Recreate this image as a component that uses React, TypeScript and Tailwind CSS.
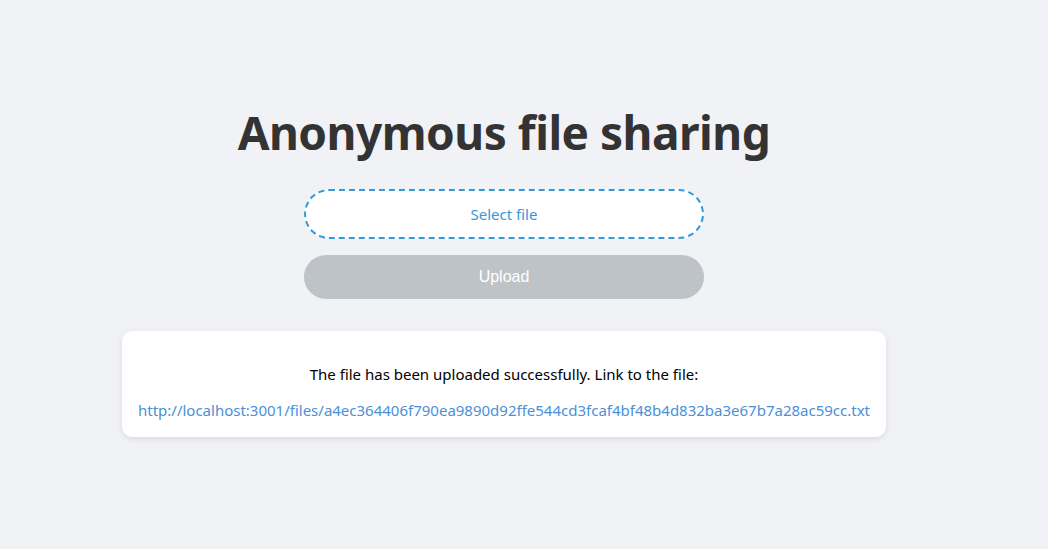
import React from "react";

export default function App() {
  return (
    <div className="min-h-[549px] w-full bg-[#f0f2f5]" style={{ fontFamily: '"Noto Sans", sans-serif' }}>
      <div className="flex w-[1008px] flex-col items-center pt-[96px]">
        <h1 className="text-[46px] font-bold leading-[72px] text-[#333333] tracking-[-0.5px]">Anonymous file sharing</h1>
        <div className="mt-[21px] flex h-[50px] w-[400px] items-center justify-center rounded-full border-2 border-dashed border-[#3498db] bg-white text-[15px] text-[#3498db]">
          Select file
        </div>
        <button
          className="mt-[16px] h-[44px] w-[400px] rounded-full bg-[#bdc3c7] text-[16px] text-white"
          style={{ fontFamily: '"Liberation Sans", Arial, sans-serif' }}
        >
          Upload
        </button>
        <div className="mt-[32px] flex flex-col items-center rounded-[10px] bg-white px-[16px] pb-[16px] pt-[32px] shadow-[0_2px_6px_rgba(0,0,0,0.1)]">
          <p className="text-[15px] leading-[22px] text-black">The file has been uploaded successfully. Link to the file:</p>
          <a className="mt-[14px] text-[15px] leading-[22px] text-[#4a90d9]" href="#">
            http://localhost:3001/files/a4ec364406f790ea9890d92ffe544cd3fcaf4bf48b4d832ba3e67b7a28ac59cc.txt
          </a>
        </div>
      </div>
    </div>
  );
}
